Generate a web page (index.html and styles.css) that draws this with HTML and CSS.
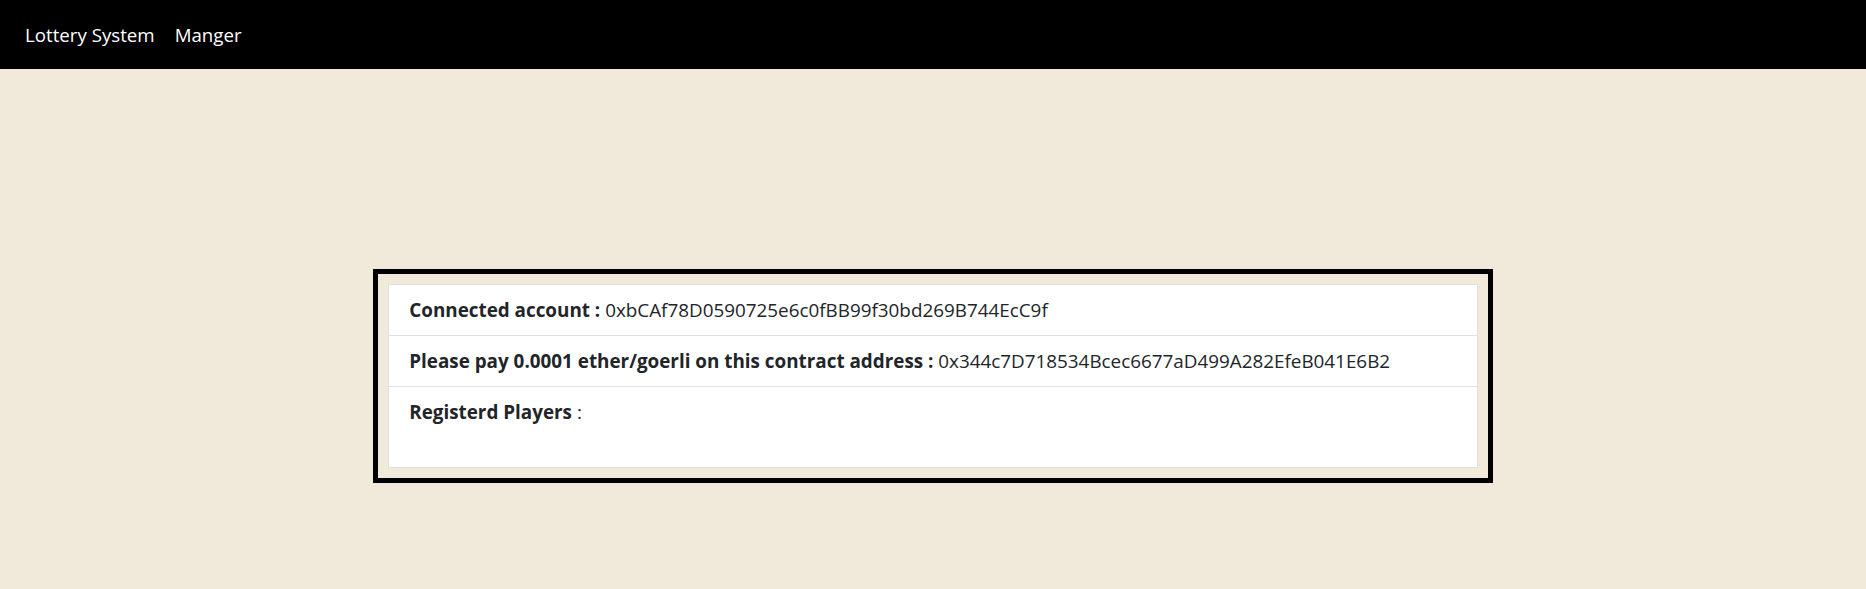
FILE: index.html
```html
<!DOCTYPE html>
<html lang="en">
<head>
<meta charset="utf-8">
<title>Lottery System</title>
<link rel="stylesheet" href="styles.css">
</head>
<body>
<nav class="navbar">
  <a class="brand" href="#">Lottery System</a>
  <a class="nav-link" href="#">Manger</a>
</nav>
<main class="content">
  <div class="panel">
    <ul class="list">
      <li class="item"><b>Connected account :</b> 0xbCAf78D0590725e6c0fBB99f30bd269B744EcC9f</li>
      <li class="item"><b>Please pay 0.0001 ether/goerli on this contract address :</b> 0x344c7D718534Bcec6677aD499A282EfeB041E6B2</li>
      <li class="item item-players"><b>Registerd Players</b> :
        <ol class="players"></ol>
      </li>
    </ul>
  </div>
</main>
</body>
</html>
```
FILE: styles.css
```css
* { box-sizing: border-box; }
html, body { margin: 0; padding: 0; }
body {
  font-family: "Open Sans", "Noto Sans", sans-serif;
  color: #212529;
  background: #f1e9d9;
  min-height: 589px;
}
.navbar {
  height: 69px;
  background: #000;
  display: flex;
  align-items: center;
  padding: 0 25px;
  gap: 20px;
}
.navbar a {
  color: #fff;
  text-decoration: none;
  font-size: 18.7px;
}
.content {
  padding-top: 200px;
}
.panel {
  width: 60%;
  margin: 0 auto;
  border: 5px solid #000;
  padding: 10px;
}
.list {
  list-style: none;
  margin: 0;
  padding: 0;
  background: #fff;
  border: 1px solid #dfdfdf;
}
.item {
  padding: 12px 20px;
  font-size: 18.85px;
  line-height: 26px;
}
.item + .item { border-top: 1px solid #dfdfdf; }
.item b { font-weight: 700; }
.players {
  margin: 0;
  padding: 0;
  height: 30px;
}
```
